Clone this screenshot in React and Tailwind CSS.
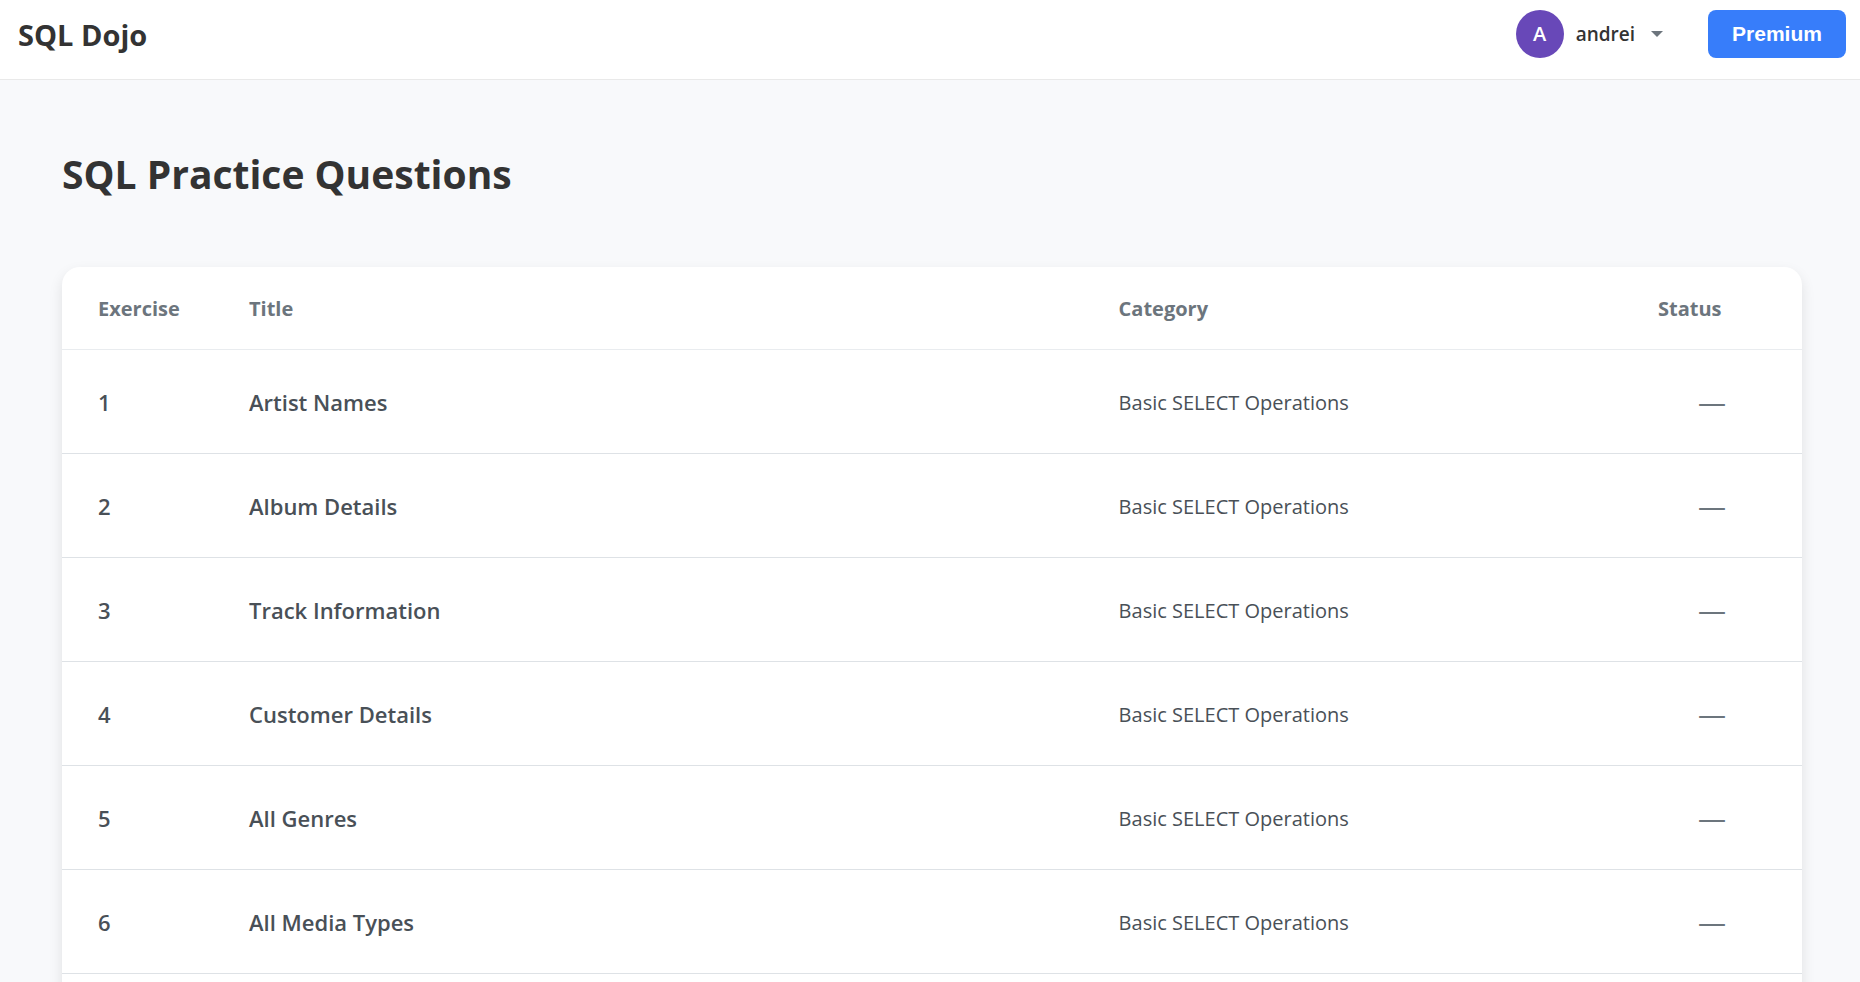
const exercises = [
  { id: 1, title: "Artist Names", category: "Basic SELECT Operations" },
  { id: 2, title: "Album Details", category: "Basic SELECT Operations" },
  { id: 3, title: "Track Information", category: "Basic SELECT Operations" },
  { id: 4, title: "Customer Details", category: "Basic SELECT Operations" },
  { id: 5, title: "All Genres", category: "Basic SELECT Operations" },
  { id: 6, title: "All Media Types", category: "Basic SELECT Operations" },
];

function Header() {
  return (
    <header className="flex h-20 items-start justify-between border-b border-[#e9e9e9] bg-white pt-[10px] pr-[14px] pl-[18px]">
      <a href="#" className="text-[29px] leading-[50px] font-bold text-[#333333]">
        SQL Dojo
      </a>
      <div className="flex items-center gap-[45px]">
        <button type="button" className="flex items-center gap-3">
          <span className="flex size-12 items-center justify-center rounded-full bg-[#6848b8] text-[20px] font-semibold text-white">
            A
          </span>
          <span className="text-[19px] font-semibold text-[#333333]">andrei</span>
          <svg viewBox="0 0 12 6" className="ml-1 h-[6px] w-3" fill="#6c757d" aria-hidden="true">
            <path d="M0 0h12L6 6z" />
          </svg>
        </button>
        <button
          type="button"
          className="h-12 w-[138px] rounded-lg bg-[#377dfa] font-['Liberation_Sans',Arial,sans-serif] text-[21px] font-bold text-white"
        >
          Premium
        </button>
      </div>
    </header>
  );
}

function ExerciseTable() {
  return (
    <div className="overflow-hidden rounded-[18px] bg-white pb-10 shadow-[0_6px_14px_rgba(0,0,0,0.1)]">
      <table className="w-full table-fixed border-collapse text-left">
        <colgroup>
          <col className="w-[151px]" />
          <col />
          <col className="w-[31%]" />
          <col className="w-[180px]" />
        </colgroup>
        <thead>
          <tr className="h-[82px] border-b border-[#e9ecef] text-[20px] text-[#6c757d]">
            <th scope="col" className="px-9 pt-[2px] font-bold">Exercise</th>
            <th scope="col" className="px-9 pt-[2px] font-bold">Title</th>
            <th scope="col" className="px-9 pt-[2px] font-bold">Category</th>
            <th scope="col" className="px-9 pt-[2px] font-bold">Status</th>
          </tr>
        </thead>
        <tbody>
          {exercises.map((exercise) => (
            <tr key={exercise.id} className="h-[104px] border-b border-[#dee2e6] text-[#495057]">
              <td className="px-9 pt-[3px] text-[22px] font-semibold">{exercise.id}</td>
              <td className="px-9 pt-[3px] text-[22px] font-semibold">{exercise.title}</td>
              <td className="px-9 pt-[3px] text-[20px]">{exercise.category}</td>
              <td className="px-9 text-center text-[28px] text-[#6c757d]">—</td>
            </tr>
          ))}
        </tbody>
      </table>
    </div>
  );
}

export default function App() {
  return (
    <div className="h-screen overflow-hidden bg-[#f8f9fb] font-['Open_Sans','Noto_Sans',sans-serif]">
      <Header />
      <main className="pt-[62px] pr-[58px] pl-[62px]">
        <h1 className="mb-[61px] text-[39px] leading-[64px] font-bold text-[#333333]">
          SQL Practice Questions
        </h1>
        <ExerciseTable />
      </main>
    </div>
  );
}
